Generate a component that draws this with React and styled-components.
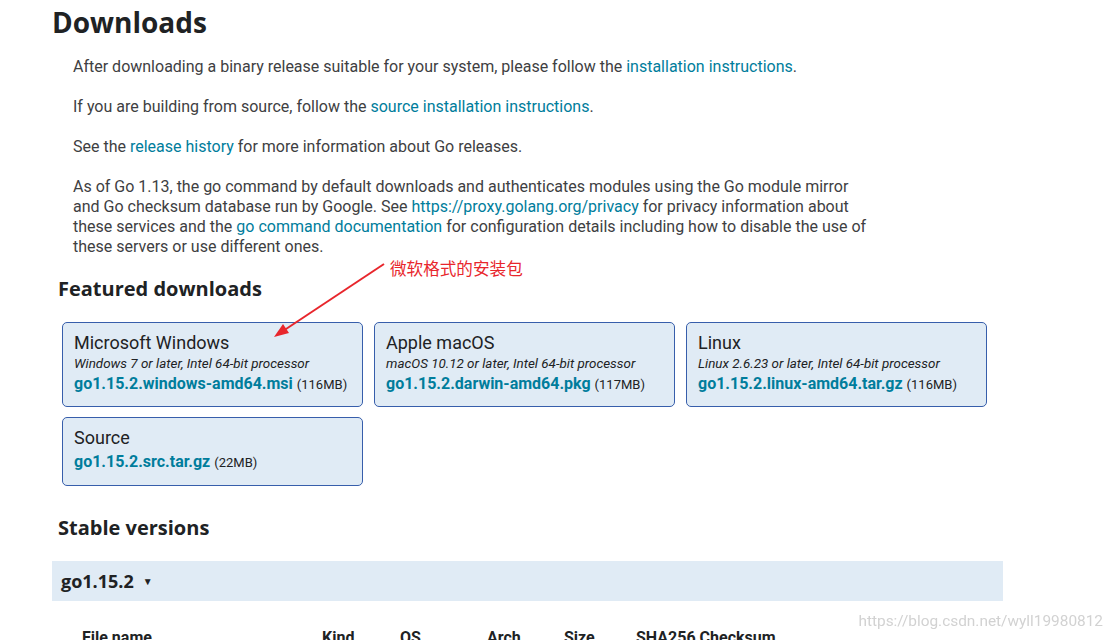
import React from 'react'
import styled, { createGlobalStyle } from 'styled-components'

const GlobalStyle = createGlobalStyle`
  body {
    margin: 0;
    background: #fff;
    font-family: Roboto, "Liberation Sans", sans-serif;
    color: #3e4042;
    overflow: hidden;
  }
`

const featured = [
  {
    title: 'Microsoft Windows',
    desc: 'Windows 7 or later, Intel 64-bit processor',
    file: 'go1.15.2.windows-amd64.msi',
    size: '116MB',
  },
  {
    title: 'Apple macOS',
    desc: 'macOS 10.12 or later, Intel 64-bit processor',
    file: 'go1.15.2.darwin-amd64.pkg',
    size: '117MB',
  },
  {
    title: 'Linux',
    desc: 'Linux 2.6.23 or later, Intel 64-bit processor',
    file: 'go1.15.2.linux-amd64.tar.gz',
    size: '116MB',
  },
  {
    title: 'Source',
    file: 'go1.15.2.src.tar.gz',
    size: '22MB',
  },
]

const columns = ['File name', 'Kind', 'OS', 'Arch', 'Size', 'SHA256 Checksum']

const App = () => {
  return (
    <>
      <GlobalStyle />
      <Page>
        <Title>Downloads</Title>
        <Text>
          After downloading a binary release suitable for your system, please follow the{' '}
          <Link>installation instructions</Link>.
        </Text>
        <Text>
          If you are building from source, follow the <Link>source installation instructions</Link>.
        </Text>
        <Text>
          See the <Link>release history</Link> for more information about Go releases.
        </Text>
        <Text>
          As of Go 1.13, the go command by default downloads and authenticates modules using the Go module mirror
          and Go checksum database run by Google. See <Link>https://proxy.golang.org/privacy</Link> for privacy
          information about these services and the <Link>go command documentation</Link> for configuration details
          including how to disable the use of these servers or use different ones.
        </Text>

        <SectionTitle>Featured downloads</SectionTitle>
        <Cards>
          {featured.map(item => (
            <Card key={item.title}>
              <CardTitle>{item.title}</CardTitle>
              {item.desc && <CardDesc>{item.desc}</CardDesc>}
              <CardLink $tight={!item.desc}>
                <FileName>{item.file}</FileName> <FileSize>({item.size})</FileSize>
              </CardLink>
            </Card>
          ))}
        </Cards>

        <StableTitle>Stable versions</StableTitle>
        <VersionBar>
          go1.15.2 <Caret>▼</Caret>
        </VersionBar>
        <TableHead>
          {columns.map(c => (
            <HeadCell key={c}>{c}</HeadCell>
          ))}
        </TableHead>

        <Note>
          微软格式的安装包
          <Arrow width="120" height="80" viewBox="0 0 120 80">
            <line x1="114" y1="3" x2="10" y2="72" stroke="#e8262c" strokeWidth="2" />
            <polygon points="4,76 19,72 13,63" fill="#e8262c" />
          </Arrow>
        </Note>
      </Page>
      <Watermark>https://blog.csdn.net/wyll19980812</Watermark>
    </>
  )
}

export default App

const Page = styled.div`
  position: relative;
  width: 951px;
  padding: 5px 0 0 52px;
`
const Title = styled.h1`
  margin: 0;
  font-family: "Open Sans", "Noto Sans", sans-serif;
  font-weight: 700;
  font-size: 28px;
  line-height: 34px;
  color: #202224;
`
const Text = styled.p`
  margin: 18px 0 20px 21px;
  width: 800px;
  font-size: 16px;
  line-height: 20px;
  & + & {
    margin-top: 20px;
  }
`
const Link = styled.a`
  color: #007d9c;
  text-decoration: none;
`
const SectionTitle = styled.h2`
  margin: 20px 0 21px 6px;
  font-family: "Open Sans", "Noto Sans", sans-serif;
  font-weight: 700;
  font-size: 20px;
  line-height: 24px;
  color: #202224;
`
const StableTitle = styled(SectionTitle)`
  margin-top: 30px;
`
const Cards = styled.div`
  display: grid;
  grid-template-columns: repeat(3, 301px);
  gap: 10px 11px;
  margin-left: 10px;
`
const Card = styled.div`
  border: 1px solid #375eab;
  border-radius: 5px;
  background: #e0ebf5;
  padding: 9px 11px 11px;
`
const CardTitle = styled.div`
  font-size: 18px;
  line-height: 22px;
  color: #202224;
`
const CardDesc = styled.div`
  font-size: 13.4px;
  line-height: 20px;
  font-style: italic;
  color: #202224;
`
const CardLink = styled.div`
  margin-top: ${p => (p.$tight ? '3px' : '0')};
  padding-bottom: ${p => (p.$tight ? '1px' : '0')};
  line-height: 20px;
`
const FileName = styled.span`
  color: #007d9c;
  font-weight: 700;
  font-size: 16px;
`
const FileSize = styled.span`
  font-size: 13px;
  color: #202224;
`
const VersionBar = styled.div`
  height: 40px;
  display: flex;
  align-items: center;
  padding-left: 9px;
  background: #e0ebf5;
  font-family: "Open Sans", "Noto Sans", sans-serif;
  font-weight: 700;
  font-size: 18px;
  color: #202224;
`
const Caret = styled.span`
  font-size: 10px;
  margin-left: 9px;
`
const TableHead = styled.div`
  display: grid;
  grid-template-columns: 240px 78px 87px 77px 72px 1fr;
  margin: 27px 0 0 30px;
`
const HeadCell = styled.div`
  font-weight: 700;
  font-size: 16px;
  line-height: 20px;
  color: #202224;
`
const Note = styled.div`
  position: absolute;
  left: 390px;
  top: 257px;
  font-family: "Noto Sans CJK SC", sans-serif;
  font-size: 16.6px;
  line-height: 22px;
  color: #e8262c;
`
const Arrow = styled.svg`
  position: absolute;
  left: -120px;
  top: 4px;
`
const Watermark = styled.div`
  position: fixed;
  right: 9px;
  top: 611px;
  font-size: 15.4px;
  line-height: 20px;
  color: #d2d2d2;
`
